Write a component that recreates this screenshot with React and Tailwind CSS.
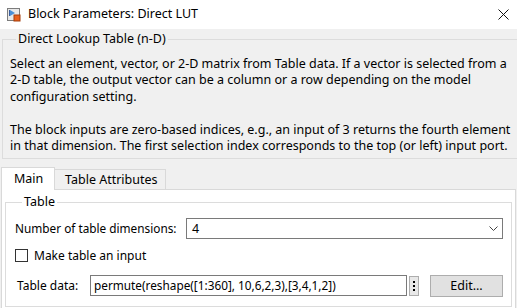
import React from "react";

const BlockIcon = () => (
  <svg width="14" height="14" viewBox="0 0 14 14">
    <rect x="0.5" y="0.5" width="12" height="12" fill="#e8e8e8" stroke="#7c7c7c" />
    <line x1="2.5" y1="2" x2="2.5" y2="8" stroke="#3a5f9e" />
    <path d="M3 2 L8 5 L3 8 Z" fill="#4a8fd6" />
    <rect x="7" y="7" width="6" height="6" fill="#e8601c" stroke="#a33d0a" />
  </svg>
);

const CloseIcon = () => (
  <svg width="11" height="11" viewBox="0 0 11 11">
    <path d="M0.5 0.5 L10.5 10.5 M10.5 0.5 L0.5 10.5" stroke="#111" strokeWidth="1" />
  </svg>
);

const Chevron = () => (
  <svg width="9" height="6" viewBox="0 0 9 6">
    <path d="M0.5 0.5 L4.5 4.5 L8.5 0.5" stroke="#444" fill="none" strokeWidth="1" />
  </svg>
);

export default function App() {
  return (
    <div
      className="w-[517px] h-[308px] overflow-hidden bg-[#f0f0f0] text-[12.5px] text-black"
      style={{ fontFamily: '"Noto Sans", sans-serif' }}
    >
      {/* Title bar */}
      <div className="h-[29px] bg-white flex items-center pl-[7px] pr-[7px]">
        <BlockIcon />
        <span className="ml-[7px]">Block Parameters: Direct LUT</span>
        <div className="ml-auto mr-[1px] flex items-center">
          <CloseIcon />
        </div>
      </div>

      {/* Description group */}
      <div className="pt-[2px]">
        <fieldset className="ml-[2px] w-[525px] border border-[#dcdcdc] pl-[7px] pr-[10px] pt-[9px] pb-[4px]">
          <legend className="ml-[6px] px-[2px] leading-[16px]">Direct Lookup Table (n-D)</legend>
          <p className="leading-[16.4px]">
            Select an element, vector, or 2-D matrix from Table data. If a vector is selected from a 2-D table, the output vector can be a column or a row depending on the model configuration setting.
          </p>
          <p className="leading-[16.4px] mt-[16.4px]">
            The block inputs are zero-based indices, e.g., an input of 3 returns the fourth element in that dimension. The first selection index corresponds to the top (or left) input port.
          </p>
        </fieldset>
      </div>

      {/* Tabs */}
      <div className="mt-[8px] flex items-end pl-[1px]">
        <div className="relative z-10 -mb-[1px] h-[23px] w-[54px] bg-white border border-b-0 border-[#d9d9d9] flex items-center pl-[12px]">
          Main
        </div>
        <div className="h-[20px] w-[111px] bg-[#f0f0f0] border-t border-r border-[#d9d9d9] flex items-center pl-[10px]">
          Table Attributes
        </div>
      </div>

      {/* Panel */}
      <div className="ml-[1px] w-[515px] h-[200px] bg-white border border-[#d9d9d9] pt-[4px] px-[3px]">
        <fieldset className="border border-[#dcdcdc] pl-[9px] pr-[8px] pt-[8px] pb-[10px] text-[12px]">
          <legend className="ml-[7px] px-[2px] leading-[16px] text-[12.5px]">Table</legend>

          <div className="flex items-center h-[21px]">
            <span className="w-[171px] shrink-0 whitespace-nowrap text-[11.8px]">Number of table dimensions:</span>
            <div className="flex-1 h-[21px] border border-[#7a7a7a] flex items-center pl-[5px] pr-[4px] text-[12.5px]">
              <span>4</span>
              <span className="ml-auto flex items-center">
                <Chevron />
              </span>
            </div>
          </div>

          <label className="mt-[10px] flex items-center h-[13px]">
            <span className="w-[13px] h-[13px] border border-[#333] bg-white" />
            <span className="ml-[6px]">Make table an input</span>
          </label>

          <div className="mt-[13px] flex items-center h-[21px]">
            <span className="pl-[2px] w-[75px] shrink-0 whitespace-nowrap">Table data:</span>
            <div className="w-[317px] h-[21px] border border-[#7a7a7a] flex items-center pl-[3px] overflow-hidden whitespace-nowrap text-[11.8px]">
              permute(reshape([1:360], 10,6,2,3),[3,4,1,2])
            </div>
            <div className="ml-[2px] w-[10px] h-[20px] bg-[#e8e8e8] border border-[#adadad] flex flex-col items-center justify-center gap-[2px]">
              <span className="w-[2px] h-[2px] bg-black" />
              <span className="w-[2px] h-[2px] bg-black" />
              <span className="w-[2px] h-[2px] bg-black" />
            </div>
            <button className="ml-[11px] w-[73px] h-[22px] bg-[#e1e1e1] border border-[#adadad] flex items-center justify-center text-[12.5px]">
              Edit...
            </button>
          </div>
        </fieldset>
      </div>
    </div>
  );
}
